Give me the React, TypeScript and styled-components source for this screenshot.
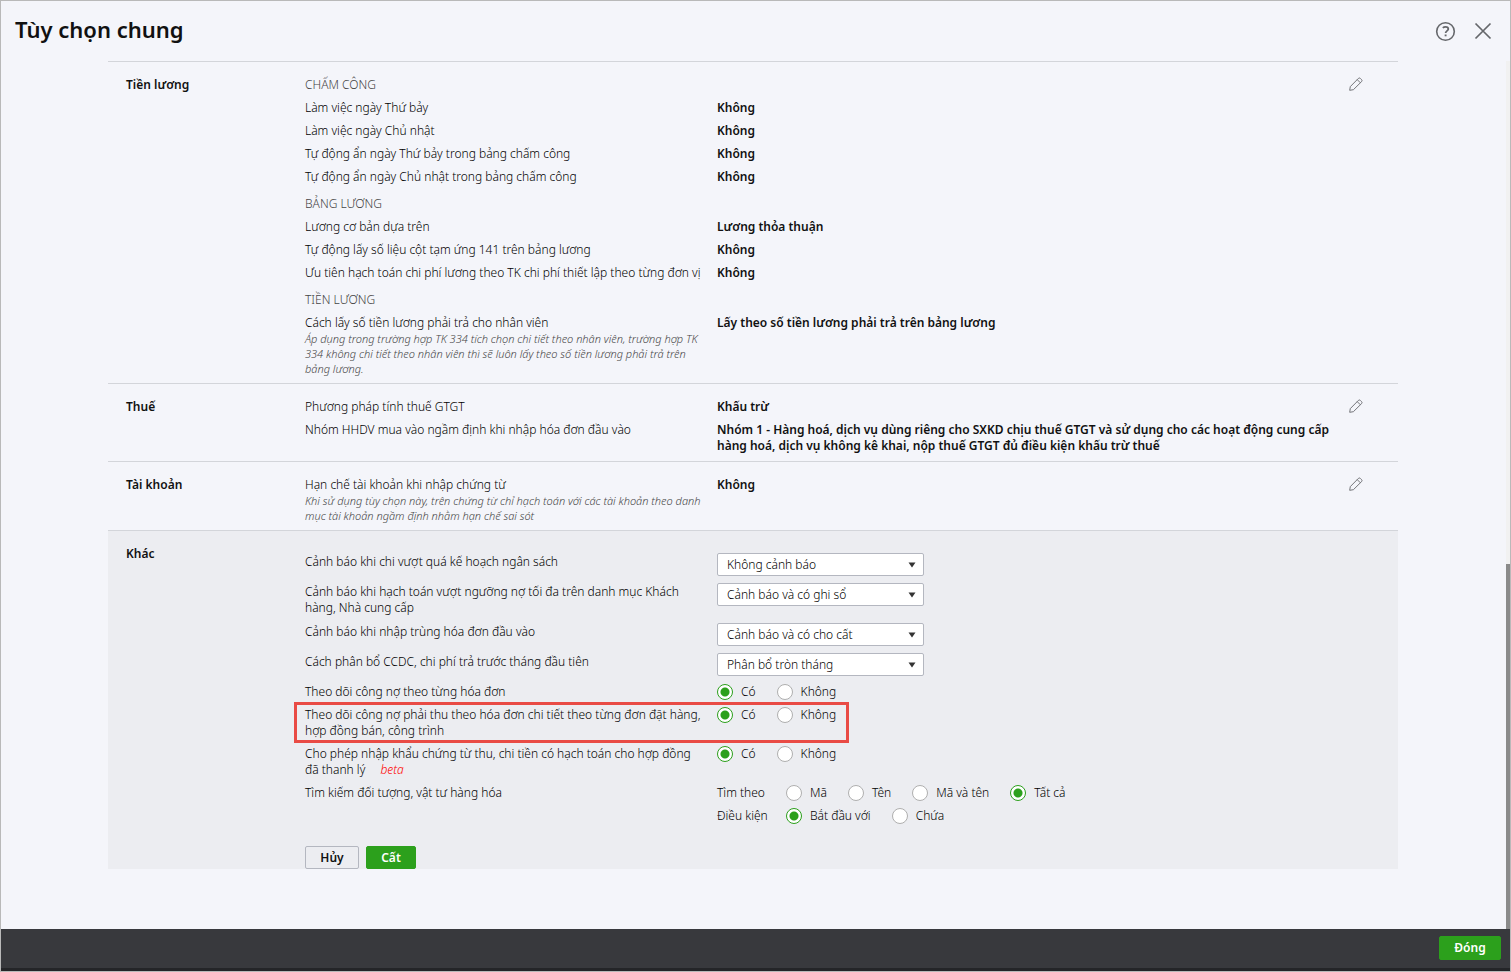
import React, { ReactNode, useState } from "react";
import styled, { createGlobalStyle, css } from "styled-components";

const Global = createGlobalStyle`
  *, *::before, *::after { box-sizing: border-box; }
  body {
    margin: 0;
    background: #f4f5fa;
    color: #000;
    font: 300 12px/16px "Noto Sans", "Open Sans", sans-serif;
  }
  button, input, select { font: inherit; color: inherit; margin: 0; }
  h1, h2, h3, p { margin: 0; }
`;

const Window = styled.div`
  min-height: 100vh;
  display: flex;
  flex-direction: column;
  border: 1px solid #b9b9b9;
`;

const Header = styled.header`
  display: flex;
  align-items: center;
  justify-content: space-between;
  height: 60px;
  padding: 0 18px 0 14px;
`;

const Title = styled.h1`
  padding-bottom: 4px;
  font-size: 22px;
  line-height: 30px;
  font-weight: 600;
  color: #111;
`;

const HeaderActions = styled.div`
  display: flex;
  align-items: center;
  gap: 18px;
`;

const IconButton = styled.button`
  display: flex;
  padding: 0;
  border: 0;
  background: none;
  color: #65676b;
  cursor: pointer;
`;

const Body = styled.div`
  flex: 1;
  display: flex;
`;

const Content = styled.main`
  flex: 1;
  padding: 0 108px 60px 107px;
`;

const ScrollTrack = styled.div`
  display: flex;
  flex-direction: column;
  justify-content: flex-end;
  width: 4px;
  background: #f1f1f1;
`;

const ScrollThumb = styled.div`
  height: 42%;
  background: #8a8a8a;
`;

const SectionBox = styled.section<{ $editing?: boolean }>`
  display: grid;
  grid-template-columns: 179px 1fr 32px;
  padding: 15px 17px 7px 18px;
  border-top: 1px solid #d3d5da;
  ${(p) =>
    p.$editing &&
    css`
      padding-bottom: 0;
      background: #ecedf1;
    `}
`;

const SectionTitle = styled.h2`
  font-size: 12px;
  line-height: 16px;
  font-weight: 600;
  color: #111;
`;

const Groups = styled.div`
  display: grid;
  gap: 11px;
`;

const Rows = styled.div`
  display: grid;
  gap: 7px;
`;

const Caption = styled.h3`
  font-size: 12px;
  line-height: 16px;
  font-weight: 300;
  color: #444;
`;

const Row = styled.div<{ $highlighted?: boolean }>`
  display: grid;
  grid-template-columns: 400px 1fr;
  column-gap: 12px;
  ${(p) =>
    p.$highlighted &&
    css`
      position: relative;
      &::after {
        content: "";
        position: absolute;
        inset: -5px auto -4px -11px;
        width: 555px;
        border: 3px solid #e94b45;
        pointer-events: none;
      }
    `}
`;

const Value = styled.p`
  max-width: 620px;
  font-weight: 600;
  color: #111;
`;

const Note = styled.p`
  font-size: 11px;
  line-height: 15px;
  font-style: italic;
  color: #444;
`;

const Form = styled.form`
  padding-top: 7px;
`;

const Options = styled.div`
  display: grid;
  gap: 7px;
  margin-top: 8px;
`;

const FieldLabel = styled.label`
  padding-top: 1px;
`;

const SelectBox = styled.div`
  display: grid;
  align-items: center;
  width: 207px;
  height: 23px;
  > * { grid-area: 1 / 1; }
  > svg { justify-self: end; margin-right: 8px; pointer-events: none; }
`;

const Select = styled.select`
  appearance: none;
  width: 100%;
  height: 23px;
  padding: 1px 24px 0 9px;
  border: 1px solid #b4b7c0;
  border-radius: 2px;
  background: #fff;
`;

const RadioLine = styled.div`
  display: flex;
  gap: 21px;
`;

const Prompt = styled.span`
  width: 48px;
  white-space: nowrap;
`;

const RadioLabel = styled.label`
  display: flex;
  gap: 8px;
  white-space: nowrap;
`;

const Radio = styled.input`
  appearance: none;
  width: 16px;
  height: 16px;
  border: 1px solid #afafaf;
  border-radius: 50%;
  background: #fff;
  &:checked {
    border-color: #2ca01c;
    background: radial-gradient(circle, #2ca01c 4px, #fff 5px);
  }
`;

const Beta = styled.em`
  margin-left: 12px;
  color: #f00;
`;

const Actions = styled.div`
  display: flex;
  gap: 7px;
  margin-top: 22px;
`;

const Button = styled.button<{ $primary?: boolean }>`
  min-width: ${(p) => (p.$primary ? 50 : 54)}px;
  height: 23px;
  padding: 0 14px;
  border: 1px solid ${(p) => (p.$primary ? "#2ca01c" : "#b4b7c0")};
  border-radius: 2px;
  background: ${(p) => (p.$primary ? "#2ca01c" : "transparent")};
  color: ${(p) => (p.$primary ? "#fff" : "#111")};
  font-weight: 600;
  line-height: 16px;
`;

const FooterButton = styled(Button)`
  min-width: 62px;
  height: 24px;
`;

const Footer = styled.footer`
  display: flex;
  justify-content: flex-end;
  align-items: center;
  height: 42px;
  padding: 0 9px 1px;
  background: #38393d;
  border-bottom: 3px solid #242528;
`;

const PencilIcon = () => (
  <svg width="14" height="14" viewBox="0 0 14 14" fill="none" stroke="currentColor" strokeLinejoin="round">
    <path d="M0.700 13.300 1.300 9.600 9.400 1.400Q10.300 0.500 11.300 1.400L12.600 2.700Q13.500 3.600 12.600 4.600L4.400 12.700ZM8.200 2.600 11.400 5.800" strokeWidth="0.900" />
  </svg>
);

const HelpIcon = () => (
  <svg width="21" height="21" viewBox="0 0 21 21" fill="none" stroke="currentColor">
    <circle cx="10.500" cy="10.500" r="8.800" strokeWidth="1.600" />
    <path d="M7.800 6.900Q8.900 5.900 10.500 5.900C12.200 5.900 13.300 6.700 13.300 8C13.300 9.900 10.600 9.900 10.600 12.100" strokeWidth="1.800" />
    <path d="M10.600 13.500V15.300" strokeWidth="1.900" />
  </svg>
);

const CloseIcon = () => (
  <svg width="18" height="18" viewBox="0 0 18 18" fill="none" stroke="currentColor">
    <path d="M1.500 1.500 16.500 16.500M16.500 1.500 1.500 16.500" strokeWidth="1.700" />
  </svg>
);

const ArrowIcon = () => (
  <svg width="8" height="6" viewBox="0 0 8 6">
    <path d="M0.500 0.500H7.500L4 5.500Z" fill="#333" />
  </svg>
);

function Section({ title, children }: { title: string; children: ReactNode }) {
  return (
    <SectionBox>
      <SectionTitle>{title}</SectionTitle>
      <Groups>{children}</Groups>
      <div>
        <IconButton type="button" aria-label={`Sửa ${title}`}>
          <PencilIcon />
        </IconButton>
      </div>
    </SectionBox>
  );
}

function Setting({ label, value, note }: { label: string; value: string; note?: string }) {
  return (
    <Row>
      <div>
        {label}
        {note && <Note>{note}</Note>}
      </div>
      <Value>{value}</Value>
    </Row>
  );
}

function SelectRow({ id, label, options }: { id: string; label: string; options: string[] }) {
  return (
    <Row>
      <FieldLabel htmlFor={id}>{label}</FieldLabel>
      <SelectBox>
        <Select id={id}>
          {options.map((o) => (
            <option key={o}>{o}</option>
          ))}
        </Select>
        <ArrowIcon />
      </SelectBox>
    </Row>
  );
}

function RadioSet({ name, options, initial, prompt, labelledBy }: {
  name: string;
  options: string[];
  initial: string;
  prompt?: string;
  labelledBy?: string;
}) {
  const [value, setValue] = useState(initial);
  return (
    <RadioLine role="radiogroup" aria-label={prompt} aria-labelledby={labelledBy}>
      {prompt && <Prompt>{prompt}</Prompt>}
      {options.map((o) => (
        <RadioLabel key={o}>
          <Radio type="radio" name={name} checked={value === o} onChange={() => setValue(o)} />
          {o}
        </RadioLabel>
      ))}
    </RadioLine>
  );
}

function YesNoRow({ name, children, highlighted }: { name: string; children: ReactNode; highlighted?: boolean }) {
  return (
    <Row $highlighted={highlighted}>
      <div id={`${name}-label`}>{children}</div>
      <RadioSet name={name} options={["Có", "Không"]} initial="Có" labelledBy={`${name}-label`} />
    </Row>
  );
}

export default function App() {
  return (
    <>
      <Global />
      <Window>
        <Header>
          <Title>Tùy chọn chung</Title>
          <HeaderActions>
            <IconButton type="button" aria-label="Trợ giúp"><HelpIcon /></IconButton>
            <IconButton type="button" aria-label="Đóng cửa sổ"><CloseIcon /></IconButton>
          </HeaderActions>
        </Header>
        <Body>
          <Content>
            <Section title="Tiền lương">
              <Rows>
                <Caption>CHẤM CÔNG</Caption>
                <Setting label="Làm việc ngày Thứ bảy" value="Không" />
                <Setting label="Làm việc ngày Chủ nhật" value="Không" />
                <Setting label="Tự động ẩn ngày Thứ bảy trong bảng chấm công" value="Không" />
                <Setting label="Tự động ẩn ngày Chủ nhật trong bảng chấm công" value="Không" />
              </Rows>
              <Rows>
                <Caption>BẢNG LƯƠNG</Caption>
                <Setting label="Lương cơ bản dựa trên" value="Lương thỏa thuận" />
                <Setting label="Tự động lấy số liệu cột tạm ứng 141 trên bảng lương" value="Không" />
                <Setting label="Ưu tiên hạch toán chi phí lương theo TK chi phí thiết lập theo từng đơn vị" value="Không" />
              </Rows>
              <Rows>
                <Caption>TIỀN LƯƠNG</Caption>
                <Setting
                  label="Cách lấy số tiền lương phải trả cho nhân viên"
                  value="Lấy theo số tiền lương phải trả trên bảng lương"
                  note="Áp dụng trong trường hợp TK 334 tích chọn chi tiết theo nhân viên, trường hợp TK 334 không chi tiết theo nhân viên thì sẽ luôn lấy theo số tiền lương phải trả trên bảng lương."
                />
              </Rows>
            </Section>
            <Section title="Thuế">
              <Rows>
                <Setting label="Phương pháp tính thuế GTGT" value="Khấu trừ" />
                <Setting
                  label="Nhóm HHDV mua vào ngầm định khi nhập hóa đơn đầu vào"
                  value="Nhóm 1 - Hàng hoá, dịch vụ dùng riêng cho SXKD chịu thuế GTGT và sử dụng cho các hoạt động cung cấp hàng hoá, dịch vụ không kê khai, nộp thuế GTGT đủ điều kiện khấu trừ thuế"
                />
              </Rows>
            </Section>
            <Section title="Tài khoản">
              <Rows>
                <Setting
                  label="Hạn chế tài khoản khi nhập chứng từ"
                  value="Không"
                  note="Khi sử dụng tùy chọn này, trên chứng từ chỉ hạch toán với các tài khoản theo danh mục tài khoản ngầm định nhằm hạn chế sai sót"
                />
              </Rows>
            </Section>
            <SectionBox $editing>
              <SectionTitle>Khác</SectionTitle>
              <Form onSubmit={(e) => e.preventDefault()}>
                <Rows>
                  <SelectRow id="budget" label="Cảnh báo khi chi vượt quá kế hoạch ngân sách" options={["Không cảnh báo", "Cảnh báo"]} />
                  <SelectRow id="debt" label="Cảnh báo khi hạch toán vượt ngưỡng nợ tối đa trên danh mục Khách hàng, Nhà cung cấp" options={["Cảnh báo và có ghi sổ", "Không cảnh báo"]} />
                  <SelectRow id="duplicate" label="Cảnh báo khi nhập trùng hóa đơn đầu vào" options={["Cảnh báo và có cho cất", "Không cảnh báo"]} />
                  <SelectRow id="allocation" label="Cách phân bổ CCDC, chi phí trả trước tháng đầu tiên" options={["Phân bổ tròn tháng", "Phân bổ theo ngày"]} />
                </Rows>
                <Options>
                  <YesNoRow name="invoice">Theo dõi công nợ theo từng hóa đơn</YesNoRow>
                  <YesNoRow name="receivable" highlighted>
                    Theo dõi công nợ phải thu theo hóa đơn chi tiết theo từng đơn đặt hàng, hợp đồng bán, công trình
                  </YesNoRow>
                  <YesNoRow name="import">
                    Cho phép nhập khẩu chứng từ thu, chi tiền có hạch toán cho hợp đồng đã thanh lý <Beta>beta</Beta>
                  </YesNoRow>
                  <Row>
                    <div>Tìm kiếm đối tượng, vật tư hàng hóa</div>
                    <Rows>
                      <RadioSet name="search-by" prompt="Tìm theo" options={["Mã", "Tên", "Mã và tên", "Tất cả"]} initial="Tất cả" />
                      <RadioSet name="condition" prompt="Điều kiện" options={["Bắt đầu với", "Chứa"]} initial="Bắt đầu với" />
                    </Rows>
                  </Row>
                </Options>
                <Actions>
                  <Button type="button">Hủy</Button>
                  <Button type="submit" $primary>Cất</Button>
                </Actions>
              </Form>
            </SectionBox>
          </Content>
          <ScrollTrack>
            <ScrollThumb />
          </ScrollTrack>
        </Body>
        <Footer>
          <FooterButton type="button" $primary>Đóng</FooterButton>
        </Footer>
      </Window>
    </>
  );
}
